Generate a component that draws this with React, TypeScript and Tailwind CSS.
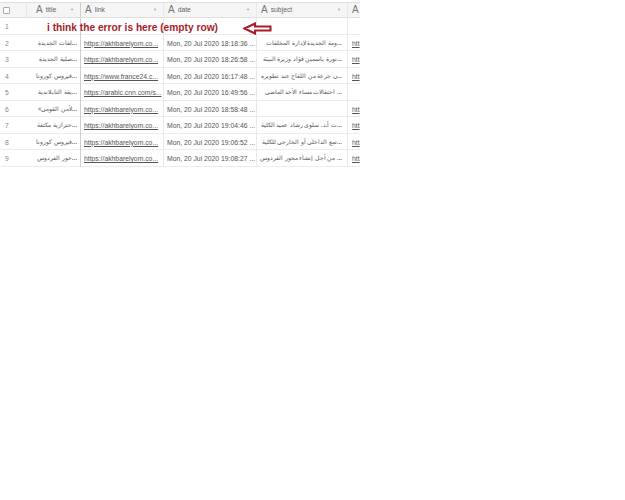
const rows = [
  { n: 1, title: "", link: "", date: "", subject: "", last: "" },
  { n: 2, title: "...لفات الجديدة", link: "https://akhbarelyom.co...", date: "Mon, 20 Jul 2020 18:18:36 ...", subject: "...ومة الجديدة لإدارة المخلفات", last: "htt" },
  { n: 3, title: "...صلية الجديدة", link: "https://akhbarelyom.co...", date: "Mon, 20 Jul 2020 18:26:58 ...", subject: "...تورة ياسمين فؤاد وزيرة البيئة", last: "htt" },
  { n: 4, title: "...فيروس كورونا", link: "https://www.france24.c...", date: "Mon, 20 Jul 2020 16:17:48 ...", subject: "...ن جرعة من اللقاح عند تطويره", last: "htt" },
  { n: 5, title: "...يقة التايلاندية", link: "https://arabic.cnn.com/s...", date: "Mon, 20 Jul 2020 16:49:56 ...", subject: "... احتفالات مساء الأحد الماضي", last: "" },
  { n: 6, title: "...لأمن القومي»", link: "https://akhbarelyom.co...", date: "Mon, 20 Jul 2020 18:58:48 ...", subject: "", last: "htt" },
  { n: 7, title: "...حترازية مكثفة", link: "https://akhbarelyom.co...", date: "Mon, 20 Jul 2020 19:04:46 ...", subject: "...ت أ.د. سلوى رشاد عميد الكلية", last: "htt" },
  { n: 8, title: "...فيروس كورونا", link: "https://akhbarelyom.co...", date: "Mon, 20 Jul 2020 19:06:52 ...", subject: "...تمع الداخلي أو الخارجي للكلية", last: "htt" },
  { n: 9, title: "...حور الفردوس", link: "https://akhbarelyom.co...", date: "Mon, 20 Jul 2020 19:08:27 ...", subject: "... من أجل إنشاء محور الفردوس", last: "htt" },
];

const columns = "grid grid-cols-[27px_54px_83px_93px_91px_12px]";

const HeaderCell = ({ label, hasMenu = true }: { label: string; hasMenu?: boolean }) => (
  <div className="flex items-center border-r border-[#e8e8e8] pl-[4px] pr-[6px] last:border-r-0">
    <span className="mr-[3px] text-[10px] leading-none text-[#777]">A</span>
    <span className="flex-1 truncate pt-[1px]">{label}</span>
    {hasMenu && <span className="text-[4px] text-[#aaa]">▼</span>}
  </div>
);

export default function App() {
  return (
    <div className="min-h-[500px] w-[625px] bg-white pt-[2px] font-['Liberation_Sans',sans-serif]">
      <div className="relative w-[360px] overflow-hidden border-t border-[#e0e0e0]">
        <div className={`${columns} h-[15px] border-b border-[#e0e0e0] bg-[#f5f5f5] text-[6.8px] text-[#666]`}>
          <div className="flex items-center border-r border-[#e8e8e8] pl-[3px]">
            <span className="h-[7px] w-[7px] rounded-[1px] border border-[#aaa] bg-white" />
          </div>
          <div className="flex items-center border-r border-[#cfcfcf] pl-[9px] pr-[6px]">
            <span className="mr-[3px] text-[10px] leading-none text-[#777]">A</span>
            <span className="flex-1 pt-[1px]">title</span>
            <span className="text-[4px] text-[#aaa]">▼</span>
          </div>
          <HeaderCell label="link" />
          <HeaderCell label="date" />
          <HeaderCell label="subject" />
          <HeaderCell label="" hasMenu={false} />
        </div>

        {rows.map((row) => (
          <div
            key={row.n}
            className={`${columns} h-[16.5px] border-b border-[#ececec] text-[6.8px] leading-[17px] text-[#555]`}
          >
            <div className="pl-[5px] text-[#888]">{row.n}</div>
            <div
              dir="rtl"
              className="overflow-hidden whitespace-nowrap border-r border-[#cfcfcf] pr-[3px] text-right font-['Noto_Sans',sans-serif] text-[6.4px] leading-[16px]"
            >
              {row.title}
            </div>
            <div className="overflow-hidden whitespace-nowrap border-r border-[#e8e8e8] pl-[3px] underline">
              {row.link}
            </div>
            <div className="overflow-hidden whitespace-nowrap border-r border-[#e8e8e8] pl-[3px]">{row.date}</div>
            <div
              dir="rtl"
              className="overflow-hidden whitespace-nowrap border-r border-[#e8e8e8] pr-[5px] text-right font-['Noto_Sans',sans-serif] text-[6.2px] leading-[16px]"
            >
              {row.subject}
            </div>
            <div className="overflow-hidden whitespace-nowrap pl-[4px] underline">{row.last}</div>
          </div>
        ))}

        {/* annotation drawn over the empty first row */}
        <div className="absolute left-[47px] top-[16px] flex h-[17px] items-center whitespace-nowrap text-[10.2px] font-bold text-[#a81c28]">
          i think the error is here (empty row)
        </div>
        <svg
          className="absolute left-[243px] top-[19px]"
          width="29"
          height="13"
          viewBox="0 0 29 13"
          fill="#ffffff"
          stroke="#a81c28"
          strokeWidth="2"
        >
          <path d="M1.5 6.5 L12 1.5 V4.5 H27.5 V8.5 H12 V11.5 Z" />
        </svg>
      </div>
    </div>
  );
}
